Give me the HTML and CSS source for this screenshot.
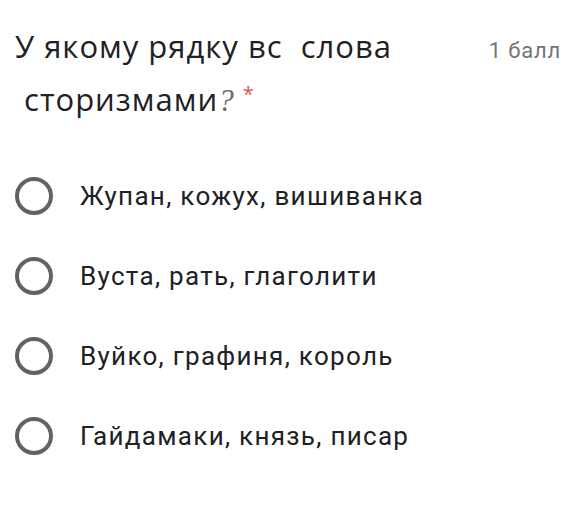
FILE: index.html
```html
<!DOCTYPE html>
<html lang="uk">
<head>
<meta charset="utf-8">
<link rel="stylesheet" href="styles.css">
</head>
<body>
<div class="question">
  <div class="header">
    <div class="title">У якому рядку вс&nbsp; слова<br>&nbsp;сторизмами<span class="qmark">?</span> <span class="req">*</span></div>
    <div class="points">1 балл</div>
  </div>
  <div class="options">
    <div class="option"><span class="radio"></span><span class="label">Жупан, кожух, вишиванка</span></div>
    <div class="option"><span class="radio"></span><span class="label">Вуста, рать, глаголити</span></div>
    <div class="option"><span class="radio"></span><span class="label">Вуйко, графиня, король</span></div>
    <div class="option"><span class="radio"></span><span class="label">Гайдамаки, князь, писар</span></div>
  </div>
</div>
</body>
</html>
```

FILE: styles.css
```css
html, body {
  margin: 0;
  padding: 0;
  background: #ffffff;
}
.question {
  padding: 22px 0 0 15px;
}
.header {
  display: flex;
  justify-content: space-between;
  align-items: baseline;
}
.title {
  font-family: "Open Sans", "Noto Sans", sans-serif;
  font-size: 31px;
  line-height: 48px;
  letter-spacing: 1px;
  color: #202124;
}
.qmark {
  font-family: "Liberation Serif", serif;
  font-style: italic;
  color: #6e6a66;
  font-size: 31px;
  letter-spacing: 0;
}
.req {
  color: #d9534f;
  font-size: 20px;
  vertical-align: 10px;
}
.points {
  font-family: "Roboto", sans-serif;
  font-size: 22px;
  letter-spacing: 0.8px;
  color: #757575;
  white-space: nowrap;
}
.options {
  display: flex;
  flex-direction: column;
  gap: 40px;
  margin-top: 51px;
}
.option {
  display: flex;
  align-items: center;
  height: 40px;
}
.radio {
  width: 30px;
  height: 30px;
  border: 4px solid #5f6368;
  border-radius: 50%;
  flex: none;
}
.label {
  font-family: "Roboto", sans-serif;
  font-size: 26px;
  letter-spacing: 1.3px;
  color: #202124;
  margin-left: 27px;
}
```
